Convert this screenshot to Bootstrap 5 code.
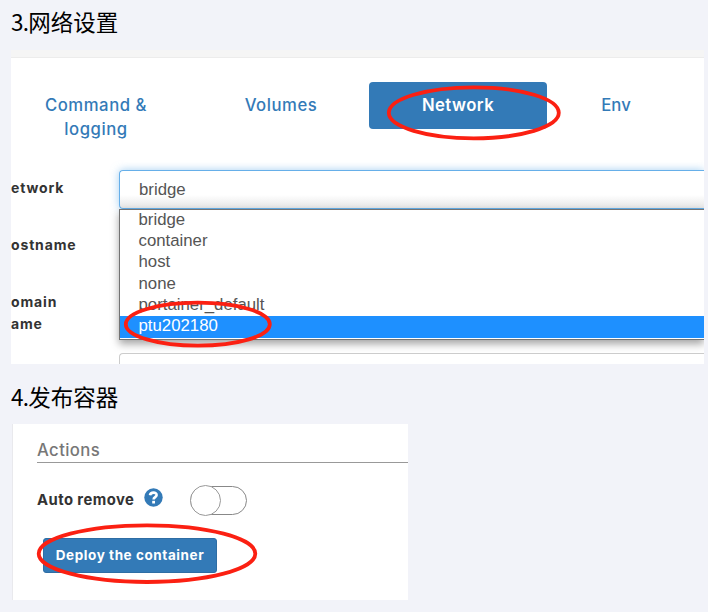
<!DOCTYPE html>
<html lang="zh-CN">
<head>
<meta charset="utf-8">
<meta name="viewport" content="width=device-width, initial-scale=1">
<title>网络设置</title>
<link href="https://cdn.jsdelivr.net/npm/bootstrap@5.3.0/dist/css/bootstrap.min.css" rel="stylesheet">
<style>
body{background:#f2f3f9;height:612px;overflow:hidden;font-family:Inter,"Open Sans",sans-serif;color:#333}
.step-title{font:400 22.5px/30px "Noto Sans CJK SC",sans-serif;color:#000;padding:6px 0 0 11px;margin:0}
.step-title.second{padding-top:17px}
.step-title .num{letter-spacing:-.7px}
.net-panel{margin:14px 0 0 11px;width:693px;height:314px}
.strip{height:8px;background:#f5f5f5;border-bottom:1px solid #ececec}
.tabs{padding-top:24px;height:112px}
.tabs .nav-link{padding:11px 0 0;height:47px;line-height:24px;font-size:16.7px;font-weight:500;color:#337ab7;text-align:center;border-radius:4px;letter-spacing:.55px}
.tabs .nav-link.active{background:#337ab7;color:#fff;font-weight:600;letter-spacing:.45px}
.t1{width:170px}.t2{width:176px;margin-left:12px}.t3{width:178px}.t4{width:134px;margin-left:2px}
.tabs .t4{letter-spacing:.1px}
.labels{width:108px;font-size:14px;font-weight:700;line-height:22px;letter-spacing:.85px;white-space:nowrap}
.labels div{padding-top:35px}
.labels div:first-child{padding-top:7px}
.sel{height:39px;border:1px solid #66afe9;border-right:0;border-radius:4px 0 0 4px;box-shadow:0 0 8px rgba(102,175,233,.6);background:linear-gradient(#fff 65%,#e6e6e6);padding-left:19px;line-height:37px}
.arial{font-family:"Liberation Sans",Arial,sans-serif;font-size:16.8px;color:#555}
.drop{height:131px;border:1px solid #737373;border-right:0;background:#fff;box-shadow:0 4px 8px rgba(0,0,0,.36)}
.opt{height:21.2px;line-height:19px;padding-left:18.5px}
.opt.on{background:#1e90ff;color:#fff;height:22px}
.next-input{height:12px;margin-top:13px;border:1px solid #ccc;border-width:1px 0 0 1px;border-radius:4px 0 0 0}
.act-panel{margin:13px 0 0 13px;width:395px;height:176px;padding:15px 0 0 24px;box-shadow:-1px 0 #e9e9ed}
.act-title{height:24px;border-bottom:1px solid #999;color:#777;font-size:16.7px;font-weight:500;line-height:22px;letter-spacing:.4px}
.auto{height:34px;margin-top:20px}
.auto b{font-size:14.8px;line-height:34px;font-weight:700;letter-spacing:.45px}
.help{margin:-5px 27px 0 10px}
.toggle{width:57px;height:29px;border:1px solid #888;border-radius:15px}
.knob{width:31px;height:31px;border:1px solid #999;border-radius:50%;margin:-2px 0 0 -1px;background:#fff}
.deploy{margin:21px 0 0 6px;width:174px;height:35px;padding:0;border:1px solid #2e6da4;border-radius:3px;background:#337ab7;color:#fff;font-size:13.5px;font-weight:700;letter-spacing:.57px;white-space:nowrap}
.marks{z-index:5;pointer-events:none}
</style>
<script src="https://cdn.jsdelivr.net/npm/bootstrap@5.3.0/dist/js/bootstrap.bundle.min.js"></script>
</head>
<body class="position-relative">
<h2 class="step-title"><span class="num">3.</span>网络设置</h2>
<section class="net-panel bg-white overflow-hidden">
  <div class="strip"></div>
  <nav class="tabs nav nav-pills flex-nowrap">
    <a class="nav-link t1">Command &amp;<br>logging</a>
    <a class="nav-link t2">Volumes</a>
    <a class="nav-link t3 active">Network</a>
    <a class="nav-link t4">Env</a>
  </nav>
  <div class="d-flex">
    <div class="labels flex-shrink-0">
      <div>etwork</div>
      <div>ostname</div>
      <div>omain<br>ame</div>
    </div>
    <div class="flex-grow-1 arial">
      <div class="sel">bridge</div>
      <div class="drop">
        <div class="opt">bridge</div>
        <div class="opt">container</div>
        <div class="opt">host</div>
        <div class="opt">none</div>
        <div class="opt">portainer_default</div>
        <div class="opt on">ptu202180</div>
      </div>
      <div class="next-input"></div>
    </div>
  </div>
</section>
<h2 class="step-title second"><span class="num">4.</span>发布容器</h2>
<section class="act-panel bg-white">
  <div class="act-title">Actions</div>
  <div class="auto d-flex align-items-center">
    <b>Auto remove</b>
    <svg class="help" width="19" height="19" viewBox="0 0 19 19"><circle cx="9.5" cy="9.5" r="9.2" fill="#337ab7"/><path d="M6 7.2C6.6 3.7 12.8 3.8 12.6 7.2C12.5 9.2 9.6 9 9.6 11.4" fill="none" stroke="#fff" stroke-width="2.6"/><path d="M8.2 12.8h2.8v2.7H8.2z" fill="#fff"/></svg>
    <div class="toggle"><div class="knob"></div></div>
  </div>
  <button class="deploy btn d-block">Deploy the container</button>
</section>
<svg class="marks position-absolute top-0 start-0" width="708" height="612" fill="none" stroke="#fb2012" stroke-width="3.8">
  <ellipse cx="473.8" cy="112.8" rx="85" ry="25.5"/>
  <ellipse cx="197.8" cy="324.2" rx="72" ry="21.5"/>
  <ellipse cx="147" cy="553.7" rx="108.3" ry="28.3"/>
</svg>
</body>
</html>
